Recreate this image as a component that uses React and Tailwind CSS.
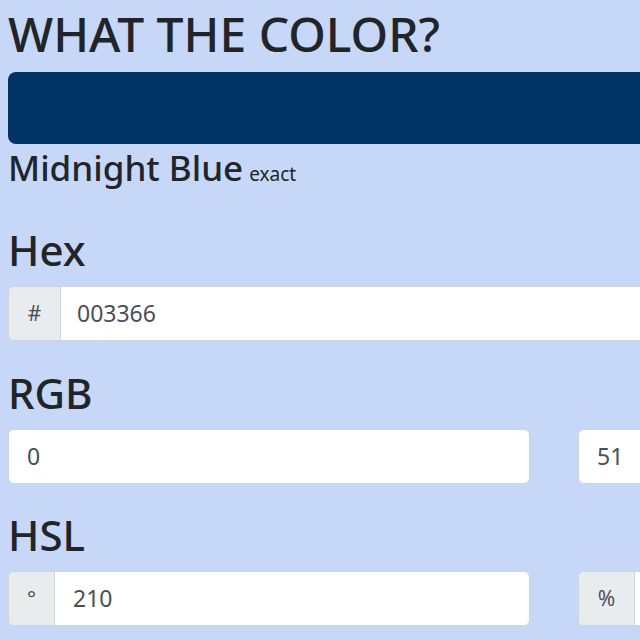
import { useState } from 'react';

const font = { fontFamily: '"Noto Sans", "Open Sans", sans-serif' };

function Field({ prefix, value, prefixWidth = 'w-[46px]' }) {
  const [val, setVal] = useState(value);
  return (
    <div className="flex h-[55px] w-[522px] overflow-hidden rounded-md border border-[#ced4da] bg-white">
      {prefix && (
        <span
          className={`flex ${prefixWidth} shrink-0 items-center justify-center border-r border-[#ced4da] bg-[#e9ecef] text-[21px] text-[#495057]`}
        >
          {prefix}
        </span>
      )}
      <input
        type="text"
        value={val}
        onChange={(e) => setVal(e.target.value)}
        className="min-w-0 flex-1 bg-transparent px-[18px] text-[23px] text-[#495057] outline-none"
        style={font}
      />
    </div>
  );
}

function Heading({ children }) {
  return <h2 className="text-[42px] font-medium leading-[50px] text-[#212529]">{children}</h2>;
}

export default function App() {
  return (
    <div className="h-[640px] w-[640px] overflow-hidden bg-[#c7d7f7] text-[#212529]" style={font}>
      <div className="w-[1800px] pl-2">
        <h1 className="pt-[4px] text-[48px] font-medium leading-[60px]">WHAT THE COLOR?</h1>
        <div className="mt-[8px] h-[72px] w-[1700px] rounded-lg bg-[#003366]" />
        <div className="mt-[2px] flex items-baseline gap-[6px]">
          <span className="text-[35px] font-medium leading-[44px]">Midnight Blue</span>
          <span className="text-[19px]">exact</span>
        </div>

        <div className="mt-[35px]">
          <Heading>Hex</Heading>
          <div className="mt-[11px]">
            <div className="flex h-[55px] w-[1700px] overflow-hidden rounded-md border border-[#ced4da] bg-white">
              <span className="flex w-[52px] shrink-0 items-center justify-center border-r border-[#ced4da] bg-[#e9ecef] text-[21px] text-[#495057]">
                #
              </span>
              <input
                type="text"
                defaultValue="003366"
                className="min-w-0 flex-1 bg-transparent px-[16px] text-[23px] text-[#495057] outline-none"
                style={font}
              />
            </div>
          </div>
        </div>

        <div className="mt-[27px]">
          <Heading>RGB</Heading>
          <div className="mt-[11px] flex gap-12">
            <Field value="0" />
            <Field value="51" />
            <Field value="102" />
          </div>
        </div>

        <div className="mt-[26px]">
          <Heading>HSL</Heading>
          <div className="mt-[11px] flex gap-12">
            <Field prefix="°" value="210" />
            <Field prefix="%" value="100" prefixWidth="w-[56px]" />
            <Field prefix="%" value="20" prefixWidth="w-[56px]" />
          </div>
        </div>
      </div>
    </div>
  );
}
